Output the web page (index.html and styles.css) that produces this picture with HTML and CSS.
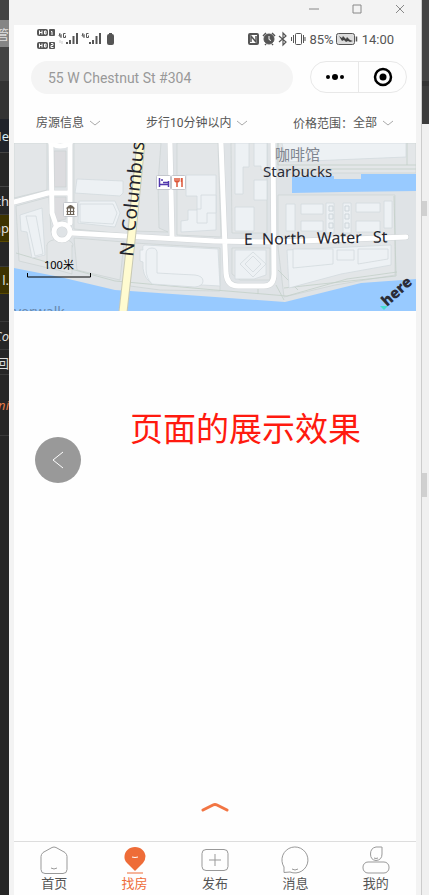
FILE: index.html
```html
<!DOCTYPE html>
<html lang="zh-CN">
<head>
    <meta charset="UTF-8">
    <meta name="viewport" content="width=device-width, initial-scale=1.0">
    <title>找房</title>
    <link rel="stylesheet" href="styles.css">
</head>
<body>

    <!-- editor behind the window, left edge -->
    <div class="editor" aria-hidden="true">
        <div class="line top"></div>
        <div class="line tab">管</div>
        <div class="line top tall"></div>
        <div class="line bar"></div>
        <div class="line head">Ne</div>
        <div class="line gutter"></div>
        <div class="line code">th</div>
        <div class="line mark">ap</div>
        <div class="line code short"></div>
        <div class="line mark">l.</div>
        <div class="line code"></div>
        <div class="line code italic">Co</div>
        <div class="line code short">回</div>
        <div class="line find">ni</div>
    </div>

    <div class="window">
        <div class="titlebar">
            <button aria-label="最小化"><svg width="12" height="12"><path d="M1 6h10"/></svg></button>
            <button aria-label="最大化"><svg width="12" height="12"><path d="M2 2h8v8H2z"/></svg></button>
            <button aria-label="关闭"><svg width="12" height="12"><path d="M2 2l8 8M10 2l-8 8"/></svg></button>
        </div>

        <div class="app">
            <div class="status">
                <svg width="80" height="20" viewBox="36 29 80 20">
                    <g fill="#555">
                        <rect x="37" y="29" width="11" height="7" rx="2"/>
                        <rect x="49" y="29" width="6" height="7" rx="1"/>
                        <rect x="37" y="42" width="11" height="7" rx="2"/>
                        <rect x="49" y="42" width="6" height="7" rx="1"/>
                    </g>
                    <g stroke="#fff" fill="none">
                        <path d="M39.500 30.500v4M42 30.500v4M39.500 32.500h2.500M44.500 31v3h1.500v-3zM51 31.500h1v3.500M39.500 43.500v4M42 43.500v4M39.500 45.500h2.500M44.500 44v3h1.500v-3zM51 43.500h2v2h-2v2h2.500"/>
                    </g>
                    <g stroke="#555" fill="none">
                        <path d="M60 33l-1 3h2.500M61 34v4M65.500 33.500H63.500v4h2v-2M83 33l-1 3h2.500M84 34v4M88.500 33.500H86.500v4h2v-2"/>
                        <path stroke-width="2" d="M67 44v-2M70 44v-4M73.500 44v-8M77 44v-11M90 44v-2M93 44v-4M96.500 44v-8M100 44v-11"/>
                    </g>
                    <path d="M60 40v3M62 41v3" stroke="#ccc"/>
                    <rect x="107" y="34" width="7" height="11" rx="2" fill="#555"/>
                    <path d="M109 33.500h3" stroke="#555"/>
                </svg>
                <div class="status-right">
                    <svg width="60" height="14" viewBox="247 32 60 14" fill="none" stroke="#555">
                        <path d="M250 34h7q1 0 1 1v8q0 1-1 1h-7q-1 0-1-1v-8q0-1 1-1z" stroke-width="2"/>
                        <path d="M251 42v-6l5 6v-6" stroke-width="1.500"/>
                        <circle cx="269" cy="39" r="5" fill="#555"/>
                        <path d="M263 36l3-3M275 36l-3-3M265 45l1-1M273 45l-1-1" stroke-width="1.500"/>
                        <path d="M269 36v3.500l2 1" stroke="#fff"/>
                        <path d="M279 36l7 6-3 3V33l3 3-7 6" stroke-width="1.200"/>
                        <rect x="295.500" y="33.500" width="6" height="11" rx="1"/>
                        <path d="M293.500 35v8M291.500 37v4M303.500 35v8M305 37v4"/>
                    </svg>
                    <span>85%</span>
                    <svg width="22" height="12" viewBox="0 0 22 12">
                        <rect x="0.500" y="0.500" width="18" height="11" rx="2" fill="#ddd" stroke="#555"/>
                        <path d="M3 3l3 2 1-2 3 3 1-2 3 3 3 1-3 1-2-1-2 1-2-2-2 1z" fill="#444"/>
                        <path d="M20.500 3.500v5" stroke="#555" stroke-width="1.500"/>
                    </svg>
                    <span class="clock">14:00</span>
                </div>
            </div>

            <div class="search-row">
                <input class="search" type="text" placeholder="55 W Chestnut St #304" aria-label="搜索地址">
                <div class="capsule">
                    <button aria-label="更多">
                        <svg width="20" height="8"><circle cx="3" cy="4" r="2"/><circle cx="10" cy="4" r="3"/><circle cx="17" cy="4" r="2"/></svg>
                    </button>
                    <button aria-label="退出">
                        <svg width="20" height="20"><circle cx="10" cy="10" r="8" fill="none" stroke="#000" stroke-width="2.500"/><circle cx="10" cy="10" r="3.500"/></svg>
                    </button>
                </div>
            </div>

            <div class="filters">
                <div class="filter">
                    <select aria-label="房源信息"><option>房源信息</option></select>
                    <svg width="12" height="8"><path d="M1 2l5 4 5-4"/></svg>
                </div>
                <div class="filter">
                    <select aria-label="步行时间"><option>步行10分钟以内</option></select>
                    <svg width="12" height="8"><path d="M1 2l5 4 5-4"/></svg>
                </div>
                <div class="filter">
                    <label for="price">价格范围：</label>
                    <select id="price"><option>全部</option></select>
                    <svg width="12" height="8"><path d="M1 2l5 4 5-4"/></svg>
                </div>
            </div>

            <svg class="map" viewBox="14 143 402 168">
                <rect x="14" y="143" width="402" height="168" fill="#dfe3e6"/>
                <!-- blocks -->
                <g fill="#e3e6e8" stroke="#cbd2d3" stroke-width="0.700">
                    <path d="M14 143h33v47l-33 8z"/>
                    <path d="M16 206l33-9 2 35 8 14-2 24-38-9z"/>
                    <path d="M54 151h12v36H54zM54 197h12v22l-12 3z" fill="#dcdcdf"/>
                    <path d="M74 143h64l-11 91-53-5z"/>
                    <path d="M144 143h17l-3 40 1 45 9 4-36-1z"/>
                    <path d="M177 143h41l3 94-44-2z"/>
                    <path d="M231 143h36v90h-35z"/>
                    <path d="M278 143h138v30H278zM278 195h117v80l-60 10-51 12-6-50z"/>
                    <path d="M74 238l50 4-4 38-43-10z"/>
                    <path d="M134 243l86 5v43l-60-1-30-4z"/>
                    <path d="M232 248h38v32h-30l-8-6z"/>
                    <ellipse cx="60" cy="245" rx="13" ry="6"/>
                    <path d="M47 245v22l25 7v-29"/>
                </g>
                <path d="M16 253l44 13 55 15 100 9 72 6 60-17 50-7M278 270l20 20M276 285l8 15M258 285v9M278 143v22M278 165h138M278 169h138M407 143v22M394 196l2 80-112 12" fill="none" stroke="#c3cfc8" stroke-width="0.800"/>
                <!-- buildings -->
                <g fill="#edf1f4" stroke="#d3dade" stroke-width="0.800">
                    <path d="M20 215l22-7 3 47-13 3-5-26-6-1z"/>
                    <path d="M26 216h10l7 38-8 2z"/>
                    <path d="M77 179l46 2v12l-3 3-45-3zM79 201h36l5 12-5 14-37-4z"/>
                    <path d="M80 204h33l4 9-4 11-33-2z"/>
                    <path d="M186 175h30v55l-35 2v-11l7-1v-10h9v-14h-11z"/>
                    <path d="M201 195h15v18h-9v10h-10v-14h4z"/>
                    <path d="M145 245l73 4 2 37-70-4q-8-6-7-20l-3-1v-11h3q-1-5 2-5z" fill="#f0f3f6"/>
                    <path d="M146 254q0-6 6-6t5 7v18l18 1 20 1q8 1 8 6t-8 6l-43-3q-6-6-6-15z"/>
                    <path d="M235 143h14v24h-6v27h-8zM254 143h13v27h-6v-4h-7zM235 207h19v24h-19zM254 180h13v20h-13z"/>
                    <path d="M282 143h124v14l-120 5zM286 204h9v27h-9zM301 204h22v10h-22zM301 221h22v10h-22zM326 203h8v30h-8zM343 203h8v30h-8zM356 203h24v9h-24zM356 221h24v11h-24zM384 201h8v27h-8z"/>
                    <path d="M287 250l104-5v20l-50 9-52 14z"/>
                    <path d="M293 249h40v15l-40 4zM337 250h17v10h-17zM358 249h30v10l-30 5z"/>
                    <path d="M235 250h31v25l-12 4h-19z"/>
                    <path d="M253 252l13 12-13 13-13-13zM253 256l8 8-8 8-8-8z"/>
                </g>
                <path d="M329 206h4v5h-4zM329 214h4v5h-4zM329 223h4v5h-4zM345 206h4v5h-4zM345 214h4v5h-4zM345 223h4v5h-4z" fill="none" stroke="#cdd5da"/>
                <!-- water -->
                <path d="M14 268l46 9 55 13 15 1 85 6 70 5 76-19 55-4v32H14z" fill="#98caff"/>
                <path d="M292 177l42-1v3h27v-5h55v17l-74 1-50 1z" fill="#98caff"/>
                <!-- roads -->
                <g class="casing">
                    <path d="M51 143l1 70 4 12M70 143v80M14 202l34-9h22M72 233l142 8 60 1 132-5M170 143l2 94M221 143l5 130q1 13 12 13h26q10 0 10-12l-1-131"/>
                    <circle cx="62" cy="232" r="8"/>
                </g>
                <g class="road">
                    <path d="M51 143l1 70 4 12M70 143v80M14 202l34-9h22M72 233l142 8 60 1 132-5M170 143l2 94M221 143l5 130q1 13 12 13h26q10 0 10-12l-1-131"/>
                    <circle cx="62" cy="232" r="8"/>
                    <path d="M51 143q9 6 19 0"/>
                </g>
                <path d="M141 142l-9 90-9 80" fill="none" stroke="#c9c9b4" stroke-width="9"/>
                <path d="M141 142l-9 90-9 80" fill="none" stroke="#fffbd0" stroke-width="7"/>
                <!-- poi icons -->
                <g fill="#fff" stroke="#c3c6cc">
                    <rect x="63.500" y="202.500" width="14" height="14" rx="1"/>
                    <rect x="156.500" y="175.500" width="14" height="14" rx="1"/>
                    <rect x="171.500" y="175.500" width="14" height="14" rx="1"/>
                </g>
                <path d="M67 208q3.500-5 7 0zM67.500 208v7M70.500 208v7M73.500 208v7M66.500 211.500h8M66.500 214.500h8" fill="#6c6256" stroke="#6c6256" stroke-width="1.200"/>
                <path d="M159.500 178v9M159.500 184.500h9M168.500 181v6M163 182.500h5M161 180h2" fill="none" stroke="#5138ad" stroke-width="1.500"/>
                <path d="M175 178v3q2 2 4 0v-3M177 178v9M182 178v9M181.500 178v4" fill="none" stroke="#dc5638" stroke-width="1.500"/>
                <!-- labels -->
                <g class="street big">
                    <text transform="translate(133 257) rotate(-84)">N</text>
                    <text transform="translate(135 232) rotate(-84)">Columbus</text>
                </g>
                <g class="street" transform="rotate(-1 244 245)">
                    <text x="244" y="245">E</text>
                    <text x="262" y="245">North</text>
                    <text x="317" y="245">Water</text>
                    <text x="373" y="245">St</text>
                </g>
                <text class="cafe" x="275" y="160">咖啡馆</text>
                <text class="shop" x="263" y="177">Starbucks</text>
                <text class="river" x="14" y="317">verwalk</text>
                <text class="scale" x="44" y="269">100米</text>
                <path d="M27.500 273v4h63v-4" fill="none" stroke="#000"/>
                <path d="M380 306h8l-4 4z" fill="#48dad0"/>
                <text class="here" transform="translate(387 307) rotate(-42)">here</text>
            </svg>

            <main class="content">
                <p class="note">页面的展示效果</p>
                <button class="back" aria-label="返回">
                    <svg width="12" height="20"><path d="M11 2L1 10l10 8"/></svg>
                </button>
                <button class="pull" aria-label="展开列表">
                    <svg width="28" height="12"><path d="M2 9l10-5q2-1 4 0l10 5"/></svg>
                </button>
            </main>

            <nav class="tabs">
                <a href="#">
                    <svg width="28" height="28"><path d="M12 1.500q2-1 4 0l9 5q2 2 2 4v13q0 4-4 4H5q-4 0-4-4v-13q0-2 2-4zM11 22q3 2 6 0"/></svg>
                    首页
                </a>
                <a href="#" class="active">
                    <svg width="28" height="28"><path d="M14 25L6 17Q3 14 3.500 10C4 5 8 1 14 1s10 4 10.500 9q0 4-2.500 7z" fill="#ee6c38" stroke="none"/><path d="M11 11q3 1 6 0" stroke="#fff"/><path d="M6 27h16"/></svg>
                    找房
                </a>
                <a href="#">
                    <svg width="28" height="28"><rect x="1" y="3.500" width="26" height="21" rx="4"/><path d="M14 8v12M8 14h12"/></svg>
                    发布
                </a>
                <a href="#">
                    <svg width="28" height="28"><path d="M3 26.500V21A13 13 0 1 1 9 26zM11 23q3 2 6 0"/></svg>
                    消息
                </a>
                <a href="#">
                    <svg width="28" height="28"><path d="M19.500 1H14q-5.500 1-5.500 7t5.500 6.500q6-.5 6-6.500V1zM12 12q2 1 4 0"/><rect x="1" y="16" width="26" height="11" rx="5"/></svg>
                    我的
                </a>
            </nav>
        </div>
    </div>

    <!-- right edge -->
    <div class="behind">
        <div class="dark"></div>
        <div class="thumb"></div>
        <div class="thumb second"></div>
    </div>

</body>
</html>
```
FILE: styles.css
```css
* {
    box-sizing: border-box;
}
body {
    display: grid;
    grid-template-columns: 9px 1fr 8px;
    min-height: 100vh;
    margin: 0;
    background-color: #262626;
    font-family: Roboto, "Noto Sans CJK SC", sans-serif;
    color: #555;
}
button {
    padding: 0;
    border: none;
    background: none;
    cursor: pointer;
}
svg {
    display: block;
    flex: none;
}

/* editor strip */
.editor {
    overflow: hidden;
    color: #ddd;
    font: 13px "Noto Sans", "Noto Sans CJK SC", sans-serif;
}
.line {
    display: flex;
    align-items: center;
    justify-content: flex-end;
    height: 27px;
    overflow: hidden;
}
.top {
    height: 20px;
    background-color: #444;
}
.tab {
    background-color: #858585;
}
.tall {
    height: 34px;
}
.bar {
    height: 38px;
    background-color: #333;
}
.head {
    height: 34px;
    background-color: #20232a;
    border-bottom: 1px solid #444;
    color: #d7ecf5;
}
.gutter {
    height: 34px;
    border-bottom: 1px solid #444;
}
.code {
    height: 28px;
    border-bottom: 1px solid #3a3a3a;
}
.code.short {
    height: 25px;
}
.mark {
    background-color: #3d3300;
    border-bottom: 1px solid #5a4a00;
}
.italic {
    font-style: italic;
}
.find {
    height: 61px;
    border-bottom: 1px solid #3a3a3a;
    color: #e07b48;
    font-style: italic;
}

/* window */
.window {
    display: flex;
    flex-direction: column;
    padding: 0 5px;
    background-color: #f3f3f3;
}
.titlebar {
    display: flex;
    justify-content: flex-end;
    gap: 31px;
    height: 25px;
    padding: 3px 10px 0 0;
}
.titlebar button {
    height: 12px;
}
.titlebar svg {
    fill: none;
    stroke: #888;
}
.app {
    display: flex;
    flex: 1;
    flex-direction: column;
    background-color: #fefefe;
}

/* phone status bar */
.status {
    display: flex;
    justify-content: space-between;
    align-items: center;
    height: 28px;
    padding: 0 22px;
    font-size: 13px;
}
.status svg {
    overflow: visible;
}
.status-right {
    display: flex;
    align-items: center;
    gap: 2px;
}
.clock {
    margin-left: 2px;
}

/* search */
.search-row {
    display: flex;
    gap: 17px;
    padding: 8px 9px 0 17px;
}
.search {
    flex: 1;
    min-width: 0;
    height: 33px;
    padding: 0 17px;
    border: none;
    border-radius: 17px;
    background-color: #f4f4f4;
    font-family: inherit;
    font-size: 14px;
}
.search::placeholder {
    color: #999;
}
.capsule {
    display: flex;
    width: 97px;
    height: 32px;
    border: 1px solid #e8e8e8;
    border-radius: 16px;
}
.capsule button {
    display: flex;
    flex: 1;
    align-items: center;
    justify-content: center;
}
.capsule button + button {
    border-left: 1px solid #e8e8e8;
}

/* filters */
.filters {
    display: flex;
    justify-content: space-between;
    align-items: center;
    height: 49px;
    padding: 8px 22px 0;
    font-size: 12px;
}
.filter {
    display: flex;
    align-items: center;
}
.filter select {
    appearance: none;
    padding: 0;
    border: none;
    background: none;
    color: inherit;
    font: inherit;
}
.filter svg {
    margin-left: 4px;
    fill: none;
    stroke: #aaa;
}

/* map */
.map {
    width: 100%;
    font-family: "Noto Sans", "Noto Sans CJK SC", sans-serif;
}
.casing,
.road {
    fill: none;
    stroke-linecap: round;
    stroke-linejoin: round;
}
.casing {
    stroke: #d2d6d8;
    stroke-width: 6px;
}
.road {
    stroke: #fff;
    stroke-width: 5px;
}
.street {
    fill: #23242c;
    font-size: 16px;
}
.street.big {
    font-size: 19px;
}
.shop {
    fill: #2b2d38;
    font-size: 15px;
}
.cafe {
    fill: #7f858f;
    font-size: 15px;
}
.river {
    fill: #6889ad;
    font-size: 14px;
}
.scale {
    fill: #000;
    font-size: 11px;
}
.here {
    fill: #2b2d38;
    font-size: 15px;
    font-weight: 900;
}

/* content */
.content {
    position: relative;
    display: flex;
    flex: 1;
    flex-direction: column;
}
.note {
    margin: 96px 0 0 116px;
    color: #ff1a0f;
    font-family: "Noto Sans CJK SC", sans-serif;
    font-size: 33px;
    line-height: 40px;
}
.back {
    position: absolute;
    top: 126px;
    left: 21px;
    display: flex;
    align-items: center;
    justify-content: center;
    width: 46px;
    height: 46px;
    border-radius: 50%;
    background-color: #999;
}
.back svg {
    fill: none;
    stroke: #fff;
}
.pull {
    align-self: center;
    margin: auto 0 28px;
}
.pull svg {
    fill: none;
    stroke: #f27543;
    stroke-width: 3px;
    stroke-linecap: round;
}

/* bottom tabs */
.tabs {
    display: flex;
    height: 54px;
    padding-top: 4px;
    border-top: 1px solid #ddd;
}
.tabs a {
    display: flex;
    flex: 1;
    flex-direction: column;
    align-items: center;
    color: #555;
    font-size: 13px;
    line-height: 20px;
    text-decoration: none;
}
.tabs svg {
    fill: none;
    stroke: #999;
}
.tabs .active {
    color: #ee6c38;
}
.tabs .active svg {
    stroke: #ee6c38;
}

/* right edge */
.behind {
    border-left: 1px solid #ccc;
    background-color: #f0f0f0;
}
.dark {
    height: 124px;
    background: linear-gradient(#444 81px, #333 81px, #333 86px, #3c3c3c 86px);
}
.thumb {
    width: 5px;
    height: 15px;
    margin-top: 77px;
    background-color: #d0d0d0;
}
.second {
    height: 24px;
    margin-top: 257px;
}
```
